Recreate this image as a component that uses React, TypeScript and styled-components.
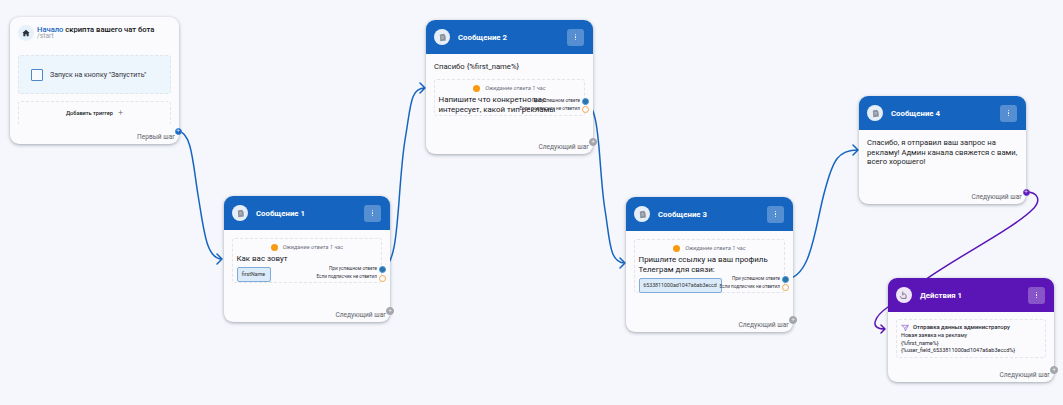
import React from "react";
import styled, { createGlobalStyle } from "styled-components";

const Global = createGlobalStyle`
  html, body { margin: 0; padding: 0; width: 1063px; height: 405px; overflow: hidden; background: #f5f7fc; }
  * { box-sizing: border-box; }
  body { font-family: Roboto, "Liberation Sans", sans-serif; color: #111; }
`;

const Canvas = styled.div`
  position: relative;
  width: 1063px;
  height: 405px;
  overflow: hidden;
  background: #f5f7fc;
`;

const Edges = styled.svg`
  position: absolute;
  inset: 0;
`;

const NodeCard = styled.div<{ $x: number; $y: number; $w: number; $h: number }>`
  position: absolute;
  left: ${(p) => p.$x}px;
  top: ${(p) => p.$y}px;
  width: ${(p) => p.$w}px;
  height: ${(p) => p.$h}px;
  background: #fbfbfe;
  border-radius: 9px;
  box-shadow: 0 1px 3.5px rgba(60, 64, 80, 0.45);
  display: flex;
  flex-direction: column;
`;

const Header = styled.div<{ $color: string }>`
  height: 34px;
  flex: none;
  display: flex;
  align-items: center;
  padding: 0 9px 0 8px;
  background: ${(p) => p.$color};
  border-radius: 9px 9px 0 0;
`;

const Avatar = styled.div<{ $tint?: string }>`
  width: 16px;
  height: 16px;
  border-radius: 50%;
  background: ${(p) => p.$tint ?? "#e6eef8"};
  display: flex;
  align-items: center;
  justify-content: center;
  flex: none;
`;

const Title = styled.div`
  margin-left: 8px;
  flex: 1;
  color: #fff;
  font-size: 7.8px;
  font-weight: 700;
  white-space: nowrap;
`;

const MenuBtn = styled.div`
  width: 17px;
  height: 17px;
  border-radius: 3px;
  background: rgba(255, 255, 255, 0.28);
  display: flex;
  flex-direction: column;
  align-items: center;
  justify-content: center;
  gap: 1.4px;
  i {
    display: block;
    width: 1.4px;
    height: 1.4px;
    border-radius: 50%;
    background: #fff;
  }
`;

const Body = styled.div`
  flex: 1;
  padding: 8px 8px 0;
  display: flex;
  flex-direction: column;
  min-height: 0;
`;

const Plain = styled.div`
  font-size: 7.7px;
  line-height: 9.5px;
  color: #1b1b1f;
  white-space: nowrap;
`;

const WaitBlock = styled.div<{ $top?: number; $h: number }>`
  position: relative;
  margin-top: ${(p) => p.$top ?? 0}px;
  height: ${(p) => p.$h}px;
  border: 1px dashed #e2e4ec;
  border-radius: 3px;
  padding: 3px 3.5px 0;
`;

const WaitRow = styled.div`
  display: flex;
  align-items: center;
  justify-content: center;
  gap: 5px;
  height: 10px;
  font-size: 5.7px;
  font-style: italic;
  color: #6c6f7c;
`;

const Clock = styled.span`
  width: 7px;
  height: 7px;
  border-radius: 50%;
  background: #f99a12;
  flex: none;
`;

const Question = styled.div`
  font-size: 7.9px;
  line-height: 9.8px;
  margin-top: 2px;
  color: #16161a;
  white-space: nowrap;
`;

const Answer = styled.div<{ $w: number }>`
  width: ${(p) => p.$w}px;
  height: 15px;
  margin-top: 3px;
  background: #dcebfa;
  border: 1px solid #7fabd9;
  border-radius: 2px;
  font-size: 5.3px;
  line-height: 13px;
  text-align: center;
  color: #333;
  white-space: nowrap;
  overflow: hidden;
`;

const Outcomes = styled.div<{ $bottom: number }>`
  position: absolute;
  right: 4px;
  bottom: ${(p) => p.$bottom}px;
  display: flex;
  flex-direction: column;
  align-items: flex-end;
  gap: 3px;
  font-size: 4.7px;
  line-height: 5px;
  color: #33343c;
  white-space: nowrap;
`;

const Port = styled.span<{ $x: number; $y: number; $size: number; $fill: string; $line: string }>`
  position: absolute;
  left: ${(p) => p.$x - p.$size / 2}px;
  top: ${(p) => p.$y - p.$size / 2}px;
  width: ${(p) => p.$size}px;
  height: ${(p) => p.$size}px;
  border-radius: 50%;
  background: ${(p) => p.$fill};
  border: 1px solid ${(p) => p.$line};
  color: rgba(255, 255, 255, 0.85);
  font-size: 6.5px;
  line-height: ${(p) => p.$size - 2}px;
  text-align: center;
`;

const Footer = styled.div`
  position: absolute;
  right: 4px;
  bottom: 3px;
  font-size: 6.6px;
  line-height: 8px;
  color: #5d5f69;
  white-space: nowrap;
`;

const StartHead = styled.div`
  display: flex;
  align-items: center;
  gap: 3px;
  padding: 8px 8px 0;
`;

const StartTitle = styled.div`
  font-size: 7.6px;
  font-weight: 500;
  line-height: 7px;
  white-space: nowrap;
  b { color: #1565c0; font-weight: 500; }
`;

const StartSub = styled.div`
  font-size: 6.7px;
  line-height: 7px;
  color: #9a9ca5;
`;

const TriggerBox = styled.div`
  margin: 14px 8px 0;
  height: 39px;
  background: #eef6fd;
  border: 1px dashed #e1e5ec;
  border-radius: 3px;
  display: flex;
  align-items: center;
  padding-left: 12px;
  gap: 7px;
  font-size: 7px;
  color: #33343c;
`;

const Check = styled.span`
  width: 12px;
  height: 12px;
  border: 1px solid #4f86c6;
  border-radius: 1px;
  background: #f7fbff;
`;

const AddBox = styled.div`
  margin: 7px 8px 0;
  height: 23px;
  border: 1px dashed #e1e5ec;
  border-bottom: none;
  border-radius: 3px 3px 0 0;
  display: flex;
  align-items: center;
  justify-content: center;
  gap: 5px;
  font-size: 5.6px;
  font-weight: 500;
  color: #222;
  span { font-size: 9px; font-weight: 300; color: #666; }
`;

const ActionBox = styled.div`
  margin: -1px 0 0;
  height: 39px;
  border: 1px dashed #e4e4ee;
  border-radius: 3px;
  padding: 4px 4px;
  font-size: 5.5px;
  line-height: 7.7px;
  color: #24242c;
  white-space: nowrap;
`;

const ActionTitle = styled.div`
  display: flex;
  align-items: center;
  gap: 4px;
  font-size: 5.9px;
  font-weight: 500;
`;

const MsgIcon = () => (
  <svg width="9" height="9" viewBox="0 0 24 24" fill="#8b929c">
    <path d="M5 4 16 2l4 5 1 13-15 2z" />
    <path d="M9 10l6-1M9 14l7-1" stroke="#c9ced6" strokeWidth="2" />
  </svg>
);

const HomeIcon = () => (
  <svg width="8" height="8" viewBox="0 0 24 24" fill="#2c3038">
    <path d="M12 2 1 12h3v10h6v-6h4v6h6V12h3z" />
  </svg>
);

const ActionIcon = () => (
  <svg width="10" height="10" viewBox="0 0 24 24" fill="none" stroke="#7b7482" strokeWidth="2.4">
    <path d="M9 13V4M9 11c2-2 6-2 7 0 1 1 1 3 1 9H6c-1-2-2-3-3-5" />
  </svg>
);

const SendIcon = () => (
  <svg width="8" height="8" viewBox="0 0 24 24" fill="none" stroke="#8a5cc9" strokeWidth="2">
    <path d="M2 4l20 0-9 17-2-9z" />
    <path d="M11 12l11-8" />
  </svg>
);

const Arrow = ({ d, color }: { d: string; color: string }) => (
  <path d={d} fill="none" stroke={color} strokeWidth="1.5" strokeLinecap="round" strokeLinejoin="round" />
);

const BLUE = "#1565c0";
const PURPLE = "#5b14b5";
const GREY = "#a3a5ab";

const NodeHeader = ({
  title,
  color = BLUE,
  tint,
  icon = <MsgIcon />,
}: {
  title: string;
  color?: string;
  tint?: string;
  icon?: React.ReactNode;
}) => (
  <Header $color={color}>
    <Avatar $tint={tint}>{icon}</Avatar>
    <Title>{title}</Title>
    <MenuBtn>
      <i />
      <i />
      <i />
    </MenuBtn>
  </Header>
);

const Wait = () => (
  <WaitRow>
    <Clock />
    Ожидание ответа 1 час
  </WaitRow>
);

const Results = ({ bottom }: { bottom: number }) => (
  <Outcomes $bottom={bottom}>
    <span>При успешном ответе</span>
    <span>Если подписчик не ответил</span>
  </Outcomes>
);

const NextStep = ({ label = "Следующий шаг" }: { label?: string }) => <Footer>{label}</Footer>;

export default function App() {
  return (
    <Canvas>
      <Global />
      <Edges width="1063" height="405" viewBox="0 0 1063 405">
        <Arrow color={BLUE} d="M178 131 C192 132 193 165 198 195 C204 230 206 259 222 259 M217 254 L222 259 L217 264" />
        <Arrow color={BLUE} d="M383 268 C400 265 397 190 405 140 C411 105 410 88 425 88 M420 83 L425 88 L420 93" />
        <Arrow color={BLUE} d="M585 101 C601 106 598 165 605 210 C610 240 609 263 625 263 M620 258 L625 263 L620 268" />
        <Arrow color={BLUE} d="M785 279 C812 279 815 225 825 190 C833 160 838 150 858 150 M853 145 L858 150 L853 155" />
        <Arrow color={PURPLE} d="M1026 192 C1038 192 1041 200 1034 208 C1015 228 960 255 925 280 L888 307 C875 316 868 329 885 329 M881 325 L885 329 L881 333" />
      </Edges>

      <NodeCard $x={10} $y={17} $w={169} $h={127}>
        <StartHead>
          <Avatar $tint="#e6f1fc">
            <HomeIcon />
          </Avatar>
          <div>
            <StartTitle>
              <b>Начало</b> скрипта вашего чат бота
            </StartTitle>
            <StartSub>/start</StartSub>
          </div>
        </StartHead>
        <TriggerBox>
          <Check />
          Запуск на кнопку "Запустить"
        </TriggerBox>
        <AddBox>
          Добавить триггер <span>+</span>
        </AddBox>
        <NextStep label="Первый шаг" />
        <Port $x={168} $y={114} $size={7} $fill={BLUE} $line="#3f86d6">+</Port>
      </NodeCard>

      <NodeCard $x={224} $y={196} $w={166} $h={126}>
        <NodeHeader title="Сообщение 1" />
        <Body>
          <WaitBlock $h={45}>
            <Wait />
            <Question>Как вас зовут</Question>
            <Answer $w={34}>firstName</Answer>
            <Results bottom={3} />
          </WaitBlock>
        </Body>
        <NextStep />
        <Port $x={158} $y={73} $size={7} $fill="#2a74a8" $line="#4a94d6" />
        <Port $x={158} $y={82} $size={7} $fill="#fbfbfe" $line="#f3a94b" />
        <Port $x={166} $y={115} $size={8} $fill={GREY} $line={GREY}>+</Port>
      </NodeCard>

      <NodeCard $x={426} $y={20} $w={167} $h={134}>
        <NodeHeader title="Сообщение 2" />
        <Body>
          <Plain>Спасибо {"{%first_name%}"}</Plain>
          <WaitBlock $top={7.5} $h={37}>
            <Wait />
            <Question>
              Напишите что конкретно вас
              <br />
              интересует, какой тип рекламы
            </Question>
            <Results bottom={4} />
          </WaitBlock>
        </Body>
        <NextStep />
        <Port $x={159} $y={81} $size={7} $fill="#2a74a8" $line="#4a94d6" />
        <Port $x={159} $y={89} $size={7} $fill="#fbfbfe" $line="#f3a94b" />
        <Port $x={167} $y={122} $size={8} $fill={GREY} $line={GREY}>+</Port>
      </NodeCard>

      <NodeCard $x={626} $y={197} $w={167} $h={135}>
        <NodeHeader title="Сообщение 3" />
        <Body>
          <WaitBlock $h={54}>
            <Wait />
            <Question>
              Пришлите ссылку на ваш профиль
              <br />
              Телеграм для связи:
            </Question>
            <Answer $w={83}>6533811000ad1047a6ab3eccd</Answer>
            <Results bottom={3} />
          </WaitBlock>
        </Body>
        <NextStep />
        <Port $x={159} $y={82} $size={7} $fill="#2a74a8" $line="#4a94d6" />
        <Port $x={159} $y={90} $size={7} $fill="#fbfbfe" $line="#f3a94b" />
        <Port $x={167} $y={123} $size={8} $fill={GREY} $line={GREY}>+</Port>
      </NodeCard>

      <NodeCard $x={859} $y={96} $w={167} $h={108}>
        <NodeHeader title="Сообщение 4" />
        <Body>
          <Plain>
            Спасибо, я отправил ваш запрос на
            <br />
            рекламу! Админ канала свяжется с вами,
            <br />
            всего хорошего!
          </Plain>
        </Body>
        <NextStep />
        <Port $x={167} $y={96} $size={7} $fill={PURPLE} $line="#7a3ed0">+</Port>
      </NodeCard>

      <NodeCard $x={888} $y={278} $w={166} $h={104}>
        <NodeHeader title="Действия 1" color={PURPLE} tint="#efe6f8" icon={<ActionIcon />} />
        <Body>
          <ActionBox>
            <ActionTitle>
              <SendIcon />
              Отправка данных администратору
            </ActionTitle>
            Новая заявка на рекламу
            <br />
            {"{%first_name%}"}
            <br />
            {"{%user_field_6533811000ad1047a6ab3eccd%}"}
          </ActionBox>
        </Body>
        <NextStep />
        <Port $x={166} $y={92} $size={8} $fill={GREY} $line={GREY}>+</Port>
      </NodeCard>
    </Canvas>
  );
}
